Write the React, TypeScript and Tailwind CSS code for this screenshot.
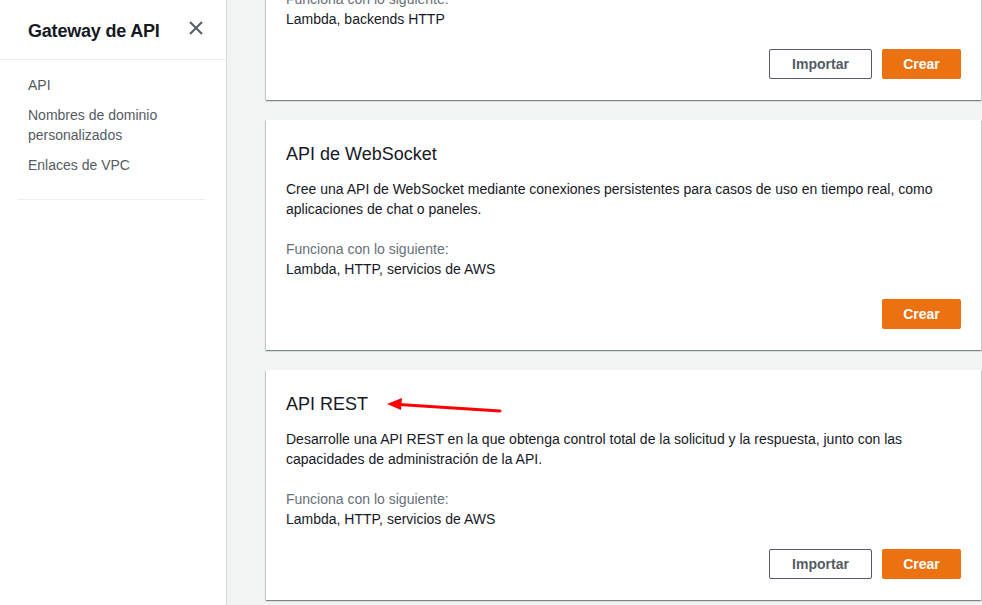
import React from "react";

const font = { fontFamily: '"Liberation Sans", Arial, sans-serif' };

function Card({
  title,
  desc,
  works,
  importar,
  children,
}: {
  title: string;
  desc: string;
  works: string;
  importar: boolean;
  children?: React.ReactNode;
}) {
  return (
    <div className="relative bg-white h-[230px] px-[20px] pt-[20px] flex flex-col shadow-[0_1px_1px_0_rgba(0,28,36,0.3),1px_1px_1px_0_rgba(0,28,36,0.15),-1px_1px_1px_0_rgba(0,28,36,0.15)]">
      <h2 className="text-[18px] leading-[28px] text-[#16191f] font-normal mb-[11px]">{title}</h2>
      <p className="text-[14px] leading-[20px] text-[#16191f] h-[40px]">{desc}</p>
      <div className="mt-[20px] text-[14px] leading-[20px]">
        <div className="text-[#687078]">Funciona con lo siguiente:</div>
        <div className="text-[#16191f]">{works}</div>
      </div>
      <div className="mt-[20px] flex justify-end gap-[10px]">
        {importar && (
          <button className="w-[103px] h-[30px] border border-[#545b64] rounded-[2px] bg-white text-[#545b64] text-[14px] font-bold">
            Importar
          </button>
        )}
        <button className="w-[79px] h-[30px] rounded-[2px] bg-[#ec7211] text-white text-[14px] font-bold">
          Crear
        </button>
      </div>
      {children}
    </div>
  );
}

export default function App() {
  return (
    <div className="flex w-[982px] h-[605px] overflow-hidden bg-[#f2f3f3]" style={font}>
      <aside className="w-[227px] shrink-0 bg-white border-r border-[#d5dbdb] flex flex-col">
        <div className="h-[60px] border-b border-[#eaeded] flex items-center justify-between pl-[28px] pr-[22px] pb-[1px]">
          <h1 className="text-[18px] font-bold text-[#16191f] leading-[24px] mt-[3px] tracking-[-0.2px]">Gateway de API</h1>
          <svg width="16" height="16" viewBox="0 0 16 16" className="-mt-[2px]">
            <path d="M2 2 L14 14 M14 2 L2 14" stroke="#545b64" strokeWidth="2" fill="none" />
          </svg>
        </div>
        <nav className="pt-[15px] pl-[28px] pr-[20px] flex flex-col gap-[10px] text-[14px] leading-[20px] text-[#545b64]">
          <a>API</a>
          <a className="w-[150px]">Nombres de dominio personalizados</a>
          <a>Enlaces de VPC</a>
        </nav>
        <div className="mx-[18px] mr-[21px] mt-[24px] border-t border-[#eaeded]" />
      </aside>
      <main className="flex-1 pl-[39px] pr-[1px] overflow-hidden">
        <div className="flex flex-col gap-[20px] -mt-[130px]">
          <Card
            title="API HTTP"
            desc="Cree API HTTP de baja latencia y rentables con integraciones directas a funciones de Lambda o backends HTTP."
            works="Lambda, backends HTTP"
            importar
          />
          <Card
            title="API de WebSocket"
            desc="Cree una API de WebSocket mediante conexiones persistentes para casos de uso en tiempo real, como aplicaciones de chat o paneles."
            works="Lambda, HTTP, servicios de AWS"
            importar={false}
          />
          <Card
            title="API REST"
            desc="Desarrolle una API REST en la que obtenga control total de la solicitud y la respuesta, junto con las capacidades de administración de la API."
            works="Lambda, HTTP, servicios de AWS"
            importar
          >
            <svg className="absolute left-[117px] top-[25px]" width="130" height="24" viewBox="0 0 130 24">
              <path d="M16 9.5 L117 16" stroke="#ff0000" strokeWidth="3" strokeLinecap="round" fill="none" />
              <polygon points="4,9 19,3 18,15" fill="#ff0000" />
            </svg>
          </Card>
        </div>
      </main>
    </div>
  );
}
